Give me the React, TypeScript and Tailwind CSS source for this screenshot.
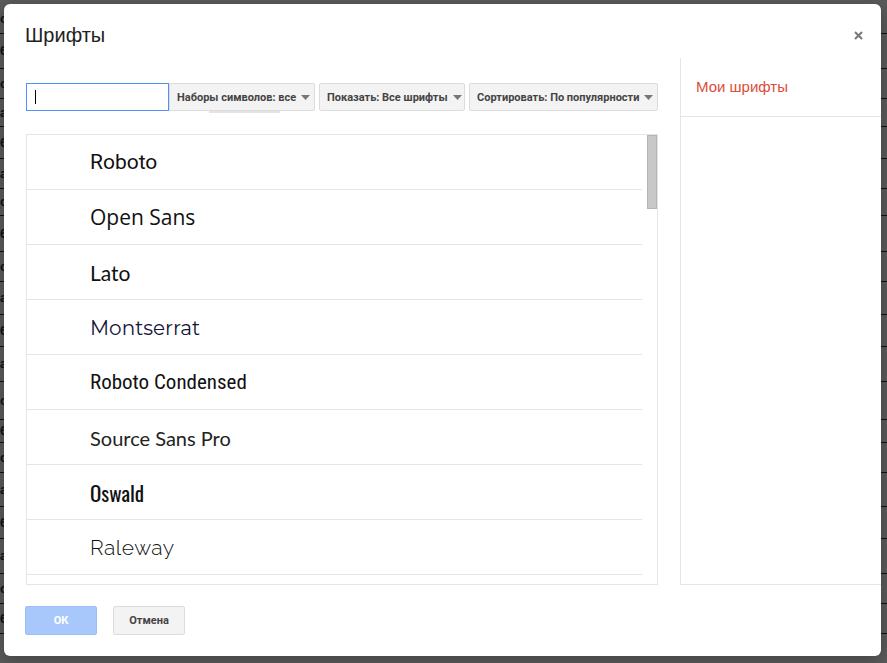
import React from "react";

const fonts = [
  { name: "Roboto", cls: "font-['Roboto',sans-serif] font-normal text-[21px] text-[#111]" },
  { name: "Open Sans", cls: "font-['Open_Sans',sans-serif] text-[21px] text-[#111]" },
  { name: "Lato", cls: "font-['Lato',sans-serif] font-normal text-[21px] text-[#111]" },
  { name: "Montserrat", cls: "font-['Montserrat','Open_Sans',sans-serif] font-normal text-[20px] text-[#14143c]" },
  { name: "Roboto Condensed", cls: "font-['Roboto_Condensed','DejaVu_Sans_Condensed','Liberation_Sans_Narrow','Roboto',sans-serif] font-stretch-condensed font-normal text-[21px] text-[#111]" },
  { name: "Source Sans Pro", cls: "font-['Source_Sans_Pro','Lato',sans-serif] font-normal text-[20px] text-[#222]" },
  { name: "Oswald", cls: "font-['Oswald','DejaVu_Sans_Condensed','Liberation_Sans_Narrow',sans-serif] font-stretch-condensed font-normal text-[21px] text-[#111]" },
  { name: "Raleway", cls: "font-['Raleway','Lato',sans-serif] font-light text-[21px] tracking-[0.5px] text-[#111]" },
  { name: "Merriweather", cls: "font-['Liberation_Serif',serif] text-[20px] text-[#111]" },
];

const bgRows = [30, 35, 30, 28, 32, 30, 27, 36, 30, 33, 32, 35, 38, 23, 30, 34, 32, 35, 30, 30];

function Caret() {
  return (
    <svg width="9" height="5" viewBox="0 0 9 5" className="ml-[5px] shrink-0">
      <path d="M0 0h9L4.5 5z" fill="#777" />
    </svg>
  );
}

function Menu({ label, width }: { label: string; width: string }) {
  return (
    <div
      className={`${width} h-[28px] flex items-center pl-[7px] pr-[6px] bg-[#f3f3f3] border border-[#dcdcdc] rounded-[2px] font-['Roboto',Arial,sans-serif] text-[11px] leading-[13px] font-bold text-[#444] whitespace-nowrap`}
    >
      <span className="flex-1">{label}</span>
      <Caret />
    </div>
  );
}

export default function App() {
  return (
    <div className="relative h-[663px] w-full overflow-hidden bg-[#5a5a5a] font-['Liberation_Sans',Arial,sans-serif]">
      {/* dimmed document behind the dialog */}
      <div className="flex flex-col pt-[4px]">
        {bgRows.map((h, i) => (
          <div
            key={i}
            style={{ height: h }}
            className="border-b border-[#111] flex items-center text-[13px] font-bold text-[#111]"
          >
            {i % 3 === 1 ? "6" : i % 2 ? "a" : "c"}
          </div>
        ))}
      </div>

      {/* dialog */}
      <div className="absolute left-[4px] top-[4px] w-[877px] h-[652px] bg-white rounded-[6px] shadow-[0_4px_16px_rgba(0,0,0,0.25)] flex flex-col">
        <div className="h-[54px] pl-[21px] pt-[19px] pr-[17px] flex items-start justify-between">
          <h1 className="text-[20px] leading-[24px] text-[#222]">Шрифты</h1>
          <button className="mt-[6px] w-[12px] h-[12px] flex items-center justify-center">
            <svg width="9" height="9" viewBox="0 0 9 9">
              <path d="M1 1l7 7M8 1L1 8" stroke="#777" strokeWidth="2" />
            </svg>
          </button>
        </div>

        <div className="flex h-[527px]">
          <div className="w-[676px] pl-[22px] pr-[22px] pt-[25px]">
            <div className="flex items-start">
              <div className="w-[143px] h-[28px] border border-[#4d90fe] flex items-center pl-[8px]">
                <span className="w-[1px] h-[14px] bg-black" />
              </div>
              <div className="relative">
                <Menu label="Наборы символов: все" width="w-[146px]" />
                <div className="absolute left-[40px] top-[28px] w-[71px] h-[2px] bg-[#e4e4e4]" />
              </div>
              <div className="ml-[4px]">
                <Menu label="Показать: Все шрифты" width="w-[146px]" />
              </div>
              <div className="ml-[4px]">
                <Menu label="Сортировать: По популярности" width="w-[189px]" />
              </div>
            </div>

            <div className="mt-[23px] h-[451px] border border-[#e5e5e5] flex overflow-hidden">
              <div className="flex-1 flex flex-col">
                {fonts.map((f) => (
                  <div
                    key={f.name}
                    className="h-[55px] shrink-0 border-b border-[#e5e5e5] flex items-center pl-[63px] pt-[1px]"
                  >
                    <span className={f.cls}>{f.name}</span>
                  </div>
                ))}
              </div>
              <div className="w-[15px] pl-[5px]">
                <div className="w-[10px] h-[74px] bg-[#c8c8c8] border border-[#b4b4b4]" />
              </div>
            </div>
          </div>

          <div className="flex-1 border-l border-b border-[#e5e5e5] flex flex-col">
            <div className="h-[59px] border-b border-[#e5e5e5] flex items-center pl-[15px] pt-[1px] text-[15px] text-[#dd4b39]">
              Мои шрифты
            </div>
          </div>
        </div>

        <div className="flex pl-[21px] pt-[21px] gap-[16px]">
          <button className="w-[72px] h-[29px] rounded-[2px] bg-[#a8c8fc] border border-[#9cbff8] text-white font-['Roboto',Arial,sans-serif] text-[11px] leading-[27px] font-bold">
            ОК
          </button>
          <button className="w-[72px] h-[29px] rounded-[2px] bg-[#f3f3f3] border border-[#dcdcdc] text-[#444] font-['Roboto',Arial,sans-serif] text-[11px] leading-[27px] font-bold">
            Отмена
          </button>
        </div>
      </div>
    </div>
  );
}
